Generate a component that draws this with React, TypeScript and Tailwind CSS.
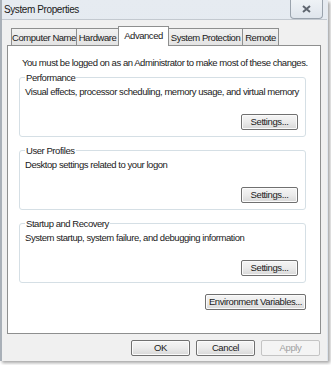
const groups = [
  {
    title: "Performance",
    text: "Visual effects, processor scheduling, memory usage, and virtual memory",
  },
  {
    title: "User Profiles",
    text: "Desktop settings related to your logon",
  },
  {
    title: "Startup and Recovery",
    text: "System startup, system failure, and debugging information",
  },
];

const tabs = [
  { label: "Computer Name", w: "w-[66px]" },
  { label: "Hardware", w: "w-[43px]" },
  { label: "Advanced", w: "w-[51px]" },
  { label: "System Protection", w: "w-[75px]" },
  { label: "Remote", w: "w-[37px]" },
];

function Btn({ label, className = "", disabled = false }: { label: string; className?: string; disabled?: boolean }) {
  return (
    <button
      className={
        "h-[16px] rounded-[2px] border text-[9.5px] tracking-[-0.4px] leading-none whitespace-nowrap flex items-center justify-center " +
        (disabled
          ? "border-[#c4c4c4] bg-[#f4f4f4] text-[#a0a0a0] "
          : "border-[#707070] bg-gradient-to-b from-[#f5f5f5] via-[#ebebeb] to-[#d8d8d8] text-[#1a1a1a] shadow-[inset_0_0_0_1px_#fbfbfb] ") +
        className
      }
    >
      {label}
    </button>
  );
}

export default function App() {
  return (
    <div className="w-[331px] h-[365px] bg-white overflow-hidden font-['Liberation_Sans',Arial,sans-serif] text-[#1a1a1a]">
      <div className="w-[328px] h-[361px] flex flex-col bg-gradient-to-b from-[#e6ebf1] to-[#dde4ec] border-l-2 border-[#a9b0b8] shadow-[2px_2px_3px_rgba(0,0,0,0.35)]">
        {/* title bar */}
        <div className="h-[19px] flex items-start justify-between">
          <span className="pl-[2px] pt-[4px] text-[10px] tracking-[-0.4px] leading-[12px]">System Properties</span>
          <div className="mr-[5px] w-[33px] h-[19px] rounded-b-[4px] border border-t-0 border-[#9aa3ad] bg-gradient-to-b from-[#eef2f6] to-[#dfe5ec] flex items-center justify-center">
            <svg width="9" height="8" viewBox="0 0 9 8">
              <path d="M1 1 L8 7 M8 1 L1 7" stroke="#5f6670" strokeWidth="2" />
            </svg>
          </div>
        </div>

        {/* client area */}
        <div className="flex-1 mr-[1px] bg-[#f0f0f0] border-t border-[#c3c9d0] flex flex-col pl-[5px] pr-[6px] pt-[6px] pb-[3px]">
          <div className="flex items-end pl-[4px] h-[19px]">
            {tabs.map((t) =>
              t.label === "Advanced" ? (
                <div
                  key={t.label}
                  className={`relative z-10 -mb-px -mr-px h-[20px] ${t.w} pt-[2px] text-center whitespace-nowrap text-[9.5px] tracking-[-0.45px] leading-[13px] bg-white border border-b-0 border-[#8e8f8f]`}
                >
                  {t.label}
                </div>
              ) : (
                <div
                  key={t.label}
                  className={`h-[17px] -mr-px ${t.w} pt-[2px] text-center whitespace-nowrap text-[9.5px] tracking-[-0.45px] leading-[13px] bg-gradient-to-b from-[#f2f2f2] to-[#e3e3e3] border border-b-0 border-[#8e8f8f]`}
                >
                  {t.label}
                </div>
              )
            )}
          </div>

          <div className="h-[289px] bg-white border border-[#8e8f8f] pl-[11px] pr-[14px] flex flex-col text-[9.5px] tracking-[-0.45px] leading-[13px]">
            <p className="mt-[10px] pl-[3px] whitespace-nowrap">
              You must be logged on as an Administrator to make most of these changes.
            </p>

            <div className="mt-[8px] flex flex-col gap-[13px]">
              {groups.map((g) => (
                <div
                  key={g.title}
                  className="relative h-[60px] border border-[#d5dfe5] rounded-[3px] px-[5px] pt-[7px] pb-[6px] flex flex-col"
                >
                  <span className="absolute -top-[7px] left-[5px] bg-white px-[1px]">{g.title}</span>
                  <p className="whitespace-nowrap">{g.text}</p>
                  <div className="mt-auto flex justify-end pr-[2px]">
                    <Btn label="Settings..." className="w-[57px]" />
                  </div>
                </div>
              ))}
            </div>

            <div className="mt-[11px] flex justify-end">
              <Btn label="Environment Variables..." className="w-[101px]" />
            </div>
          </div>

          <div className="mt-[6px] flex justify-end gap-[6px] pr-[1px]">
            <Btn label="OK" className="w-[59px]" />
            <Btn label="Cancel" className="w-[59px]" />
            <Btn label="Apply" className="w-[59px]" disabled />
          </div>
        </div>
      </div>
    </div>
  );
}
